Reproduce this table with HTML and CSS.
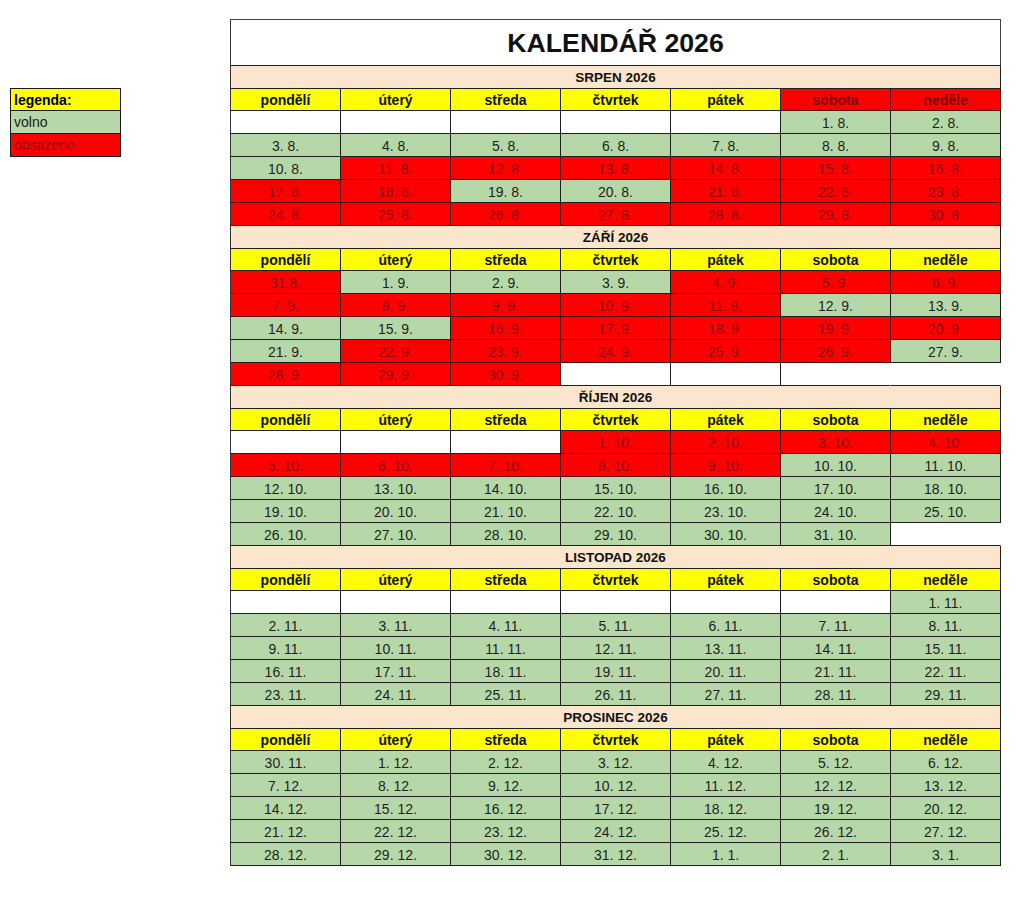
FILE: index.html
```html
<!DOCTYPE html>
<html lang="cs">
<head>
<meta charset="utf-8">
<title>Kalendář 2026</title>
<link rel="stylesheet" href="styles.css">
</head>
<body>
<div class="page">
  <div class="legend">
    <div class="lg-row lg-head">legenda:</div>
    <div class="lg-row lg-free">volno</div>
    <div class="lg-row lg-busy">obsazeno</div>
  </div>

  <div class="cal">
    <div class="title">KALENDÁŘ 2026</div>

    <div class="month">SRPEN 2026</div>
    <div class="head">pondělí</div><div class="head">úterý</div><div class="head">středa</div><div class="head">čtvrtek</div><div class="head">pátek</div><div class="head weekend">sobota</div><div class="head weekend">neděle</div>
    <div class="c w"></div><div class="c w"></div><div class="c w"></div><div class="c w"></div><div class="c w"></div><div class="c g">1. 8.</div><div class="c g">2. 8.</div>
    <div class="c g">3. 8.</div><div class="c g">4. 8.</div><div class="c g">5. 8.</div><div class="c g">6. 8.</div><div class="c g">7. 8.</div><div class="c g">8. 8.</div><div class="c g">9. 8.</div>
    <div class="c g">10. 8.</div><div class="c r">11. 8.</div><div class="c r">12. 8.</div><div class="c r">13. 8.</div><div class="c r">14. 8.</div><div class="c r">15. 8.</div><div class="c r">16. 8.</div>
    <div class="c r">17. 8.</div><div class="c r">18. 8.</div><div class="c g">19. 8.</div><div class="c g">20. 8.</div><div class="c r">21. 8.</div><div class="c r">22. 8.</div><div class="c r">23. 8.</div>
    <div class="c r">24. 8.</div><div class="c r">25. 8.</div><div class="c r">26. 8.</div><div class="c r">27. 8.</div><div class="c r">28. 8.</div><div class="c r">29. 8.</div><div class="c r">30. 8.</div>

    <div class="month">ZÁŘÍ 2026</div>
    <div class="head">pondělí</div><div class="head">úterý</div><div class="head">středa</div><div class="head">čtvrtek</div><div class="head">pátek</div><div class="head">sobota</div><div class="head">neděle</div>
    <div class="c r">31.8.</div><div class="c g">1. 9.</div><div class="c g">2. 9.</div><div class="c g">3. 9.</div><div class="c r">4. 9.</div><div class="c r">5. 9.</div><div class="c r">6. 9.</div>
    <div class="c r">7. 9.</div><div class="c r">8. 9.</div><div class="c r">9. 9.</div><div class="c r">10. 9.</div><div class="c r">11. 9.</div><div class="c g">12. 9.</div><div class="c g">13. 9.</div>
    <div class="c g">14. 9.</div><div class="c g">15. 9.</div><div class="c r">16. 9.</div><div class="c r">17. 9.</div><div class="c r">18. 9.</div><div class="c r">19. 9.</div><div class="c r">20. 9.</div>
    <div class="c g">21. 9.</div><div class="c r">22. 9.</div><div class="c r">23. 9.</div><div class="c r">24. 9.</div><div class="c r">25. 9.</div><div class="c r">26. 9.</div><div class="c g">27. 9.</div>
    <div class="c r">28. 9.</div><div class="c r">29. 9.</div><div class="c r">30. 9.</div><div class="c w"></div><div class="c w"></div><div class="c n"></div><div class="c n"></div>

    <div class="month">ŘÍJEN 2026</div>
    <div class="head">pondělí</div><div class="head">úterý</div><div class="head">středa</div><div class="head">čtvrtek</div><div class="head">pátek</div><div class="head">sobota</div><div class="head">neděle</div>
    <div class="c w"></div><div class="c w"></div><div class="c w"></div><div class="c r">1. 10.</div><div class="c r">2. 10.</div><div class="c r">3. 10.</div><div class="c r">4. 10.</div>
    <div class="c r">5. 10.</div><div class="c r">6. 10.</div><div class="c r">7. 10.</div><div class="c r">8. 10.</div><div class="c r">9. 10.</div><div class="c g">10. 10.</div><div class="c g">11. 10.</div>
    <div class="c g">12. 10.</div><div class="c g">13. 10.</div><div class="c g">14. 10.</div><div class="c g">15. 10.</div><div class="c g">16. 10.</div><div class="c g">17. 10.</div><div class="c g">18. 10.</div>
    <div class="c g">19. 10.</div><div class="c g">20. 10.</div><div class="c g">21. 10.</div><div class="c g">22. 10.</div><div class="c g">23. 10.</div><div class="c g">24. 10.</div><div class="c g">25. 10.</div>
    <div class="c g">26. 10.</div><div class="c g">27. 10.</div><div class="c g">28. 10.</div><div class="c g">29. 10.</div><div class="c g">30. 10.</div><div class="c g">31. 10.</div><div class="c n"></div>

    <div class="month">LISTOPAD 2026</div>
    <div class="head">pondělí</div><div class="head">úterý</div><div class="head">středa</div><div class="head">čtvrtek</div><div class="head">pátek</div><div class="head">sobota</div><div class="head">neděle</div>
    <div class="c w"></div><div class="c w"></div><div class="c w"></div><div class="c w"></div><div class="c w"></div><div class="c w"></div><div class="c g">1. 11.</div>
    <div class="c g">2. 11.</div><div class="c g">3. 11.</div><div class="c g">4. 11.</div><div class="c g">5. 11.</div><div class="c g">6. 11.</div><div class="c g">7. 11.</div><div class="c g">8. 11.</div>
    <div class="c g">9. 11.</div><div class="c g">10. 11.</div><div class="c g">11. 11.</div><div class="c g">12. 11.</div><div class="c g">13. 11.</div><div class="c g">14. 11.</div><div class="c g">15. 11.</div>
    <div class="c g">16. 11.</div><div class="c g">17. 11.</div><div class="c g">18. 11.</div><div class="c g">19. 11.</div><div class="c g">20. 11.</div><div class="c g">21. 11.</div><div class="c g">22. 11.</div>
    <div class="c g">23. 11.</div><div class="c g">24. 11.</div><div class="c g">25. 11.</div><div class="c g">26. 11.</div><div class="c g">27. 11.</div><div class="c g">28. 11.</div><div class="c g">29. 11.</div>

    <div class="month">PROSINEC 2026</div>
    <div class="head">pondělí</div><div class="head">úterý</div><div class="head">středa</div><div class="head">čtvrtek</div><div class="head">pátek</div><div class="head">sobota</div><div class="head">neděle</div>
    <div class="c g">30. 11.</div><div class="c g">1. 12.</div><div class="c g">2. 12.</div><div class="c g">3. 12.</div><div class="c g">4. 12.</div><div class="c g">5. 12.</div><div class="c g">6. 12.</div>
    <div class="c g">7. 12.</div><div class="c g">8. 12.</div><div class="c g">9. 12.</div><div class="c g">10. 12.</div><div class="c g">11. 12.</div><div class="c g">12. 12.</div><div class="c g">13. 12.</div>
    <div class="c g">14. 12.</div><div class="c g">15. 12.</div><div class="c g">16. 12.</div><div class="c g">17. 12.</div><div class="c g">18. 12.</div><div class="c g">19. 12.</div><div class="c g">20. 12.</div>
    <div class="c g">21. 12.</div><div class="c g">22. 12.</div><div class="c g">23. 12.</div><div class="c g">24. 12.</div><div class="c g">25. 12.</div><div class="c g">26. 12.</div><div class="c g">27. 12.</div>
    <div class="c g">28. 12.</div><div class="c g">29. 12.</div><div class="c g">30. 12.</div><div class="c g">31. 12.</div><div class="c g">1. 1.</div><div class="c g">2. 1.</div><div class="c g">3. 1.</div>
  </div>
</div>
</body>
</html>
```

FILE: styles.css
```css
* {
  box-sizing: border-box;
}

html, body {
  margin: 0;
  padding: 0;
  background: #ffffff;
}

body {
  font-family: "Liberation Sans", Arial, sans-serif;
  font-size: 14px;
  color: #1a1a1a;
}

.page {
  display: flex;
  align-items: flex-start;
  padding-top: 19px;
}

/* legend */
.legend {
  width: 111px;
  margin-left: 10px;
  margin-top: 69px;
  border-left: 1px solid #1a1a1a;
  border-top: 1px solid #1a1a1a;
  display: flex;
  flex-direction: column;
}

.lg-row {
  height: 23px;
  padding-left: 3px;
  display: flex;
  align-items: center;
  border-right: 1px solid #1a1a1a;
  border-bottom: 1px solid #1a1a1a;
}

.lg-head {
  height: 22px;
  background: #ffff00;
  font-weight: bold;
  color: #000;
}

.lg-free {
  background: #b6d7a8;
}

.lg-busy {
  background: #ff0000;
  color: #8e0000;
}

/* calendar */
.cal {
  margin-left: 109px;
  display: grid;
  grid-template-columns: repeat(7, 110px);
  width: 771px;
  border-left: 1px solid #333;
  border-top: 1px solid #444;
}

.cal > div {
  display: flex;
  align-items: center;
  justify-content: center;
  border-right: 1px solid #1e1e1e;
  border-bottom: 1px solid #1e1e1e;
}

.title {
  grid-column: 1 / -1;
  height: 46px;
  font-size: 26.7px;
  font-weight: bold;
  color: #111;
  background: #fff;
  border-right-color: #444 !important;
  padding-top: 1px;
}

.month {
  grid-column: 1 / -1;
  height: 23px;
  background: #fce5cd;
  font-weight: bold;
  font-size: 13.5px;
  color: #111;
}

.head {
  height: 22px;
  background: #ffff00;
  font-weight: bold;
  color: #111;
}

.head.weekend {
  background: #ff0000;
  color: #7a0000;
  border-color: #5a0000 !important;
}

.c {
  height: 23px;
  padding-top: 1px;
}

.g {
  background: #b6d7a8;
  color: #1f1f1f;
}

.r {
  background: #ff0000;
  color: #8e0000;
  border-color: #4a0606 !important;
}

.w {
  background: #ffffff;
}

.n {
  background: #ffffff;
  border-right-color: transparent !important;
}
```
